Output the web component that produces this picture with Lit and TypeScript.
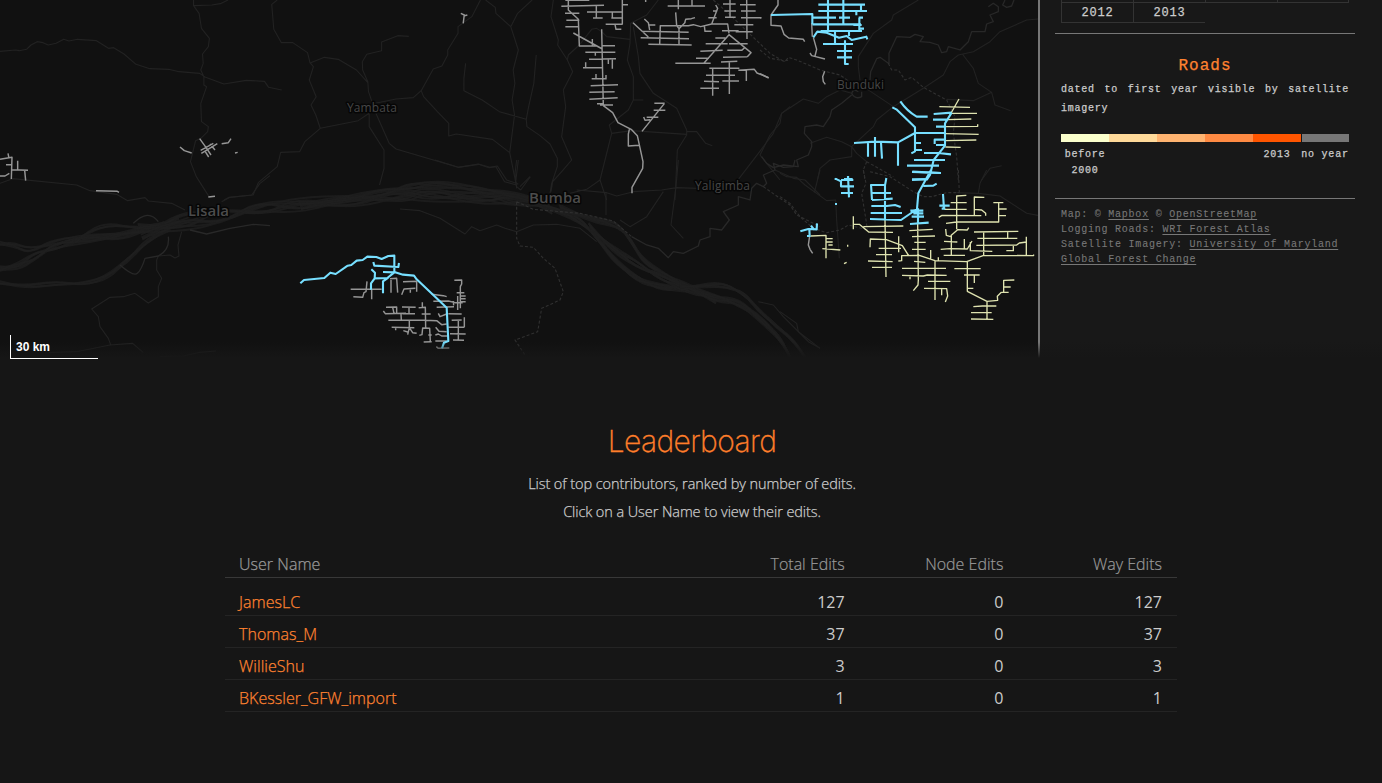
import { LitElement, html, svg, css } from "lit";
import { customElement } from "lit/decorators.js";

type Pt = [number, number];
type Tile = { t: string; dim?: string; dash?: string; water?: string; gray?: string; cream?: string; blue?: string };

// Road tiles: each holds its own origin and is stored at three units per pixel.
const tiles: Tile[] = [
  {
    t: "translate(0 0) scale(.3444 .33333)",
    dim: `M0 154L45 150 56 152 77 148 90 135 108 125 125 128 140 135 163 130 185 118 200 123 225 118 280 122 315 145 330 143 360 162 395 193 435 206 490 208 520 215 580 220 595 231 650 252 715 241 768 244 780 262 818 270
M562 0V17L578 40 585 85 608 115 605 140 588 162 590 190 583 210 592 230V255L600 260 583 310 585 365 605 380 603 395 583 415 568 422 553 485 570 530 607 590
M562 17L615 15 640 11 662 0 M805 0L789 13 795 88 817 128 850 128 893 158 900 188 910 200 898 240 918 290 903 315 917 345 930 385 885 425 870 455 815 457 805 500 750 548 735 585 665 592 650 600
M902 188L942 172 982 178 1035 210 1068 248 M1187 109L1155 107 1108 126V152L1065 163 1052 185 1053 210 1068 245 1070 275 1080 305 1090 310 1150 297 1200 293 1223 272 1258 207 1283 198 1300 165 1300 150 1330 100 1330 80 1370 50 1395 0
M930 385L1040 362 1072 340V380L1115 450V505L1102 555 M1085 325L1130 430 1150 447 1330 502 1390 493 1420 503 1440 500 1465 545 1500 555
M1223 272L1230 290 1270 335 1303 370 1303 408 1325 402 1430 418 1480 458 1500 560 1512 570 M1410 0L1438 22 1440 40 1483 80 1505 150 1490 210 1495 250 1487 300 1494 345 1480 458 M1545 0L1503 40 1483 80
M1352 190L1347 235V272L1400 300 1450 335 1528 358 1535 320 1550 250 1557 165 M1528 358L1530 380 1568 407 M1505 480L1498 540 M1512 570L1540 530`,
    gray: "M1338 40L1348 45 1345 70 M1346 48L1357 45",
  },
  {
    t: "translate(0 130) scale(.33333)",
    dim: `M0 160L38 146 230 165 270 182 350 193 383 212 435 203 445 213 515 220 555 240 M810 137L780 160 755 195 690 202 665 215
M545 305L534 345 537 378 525 384 510 375 475 378 470 390V420L485 445 475 470V500L445 519 405 490 370 500 330 502 275 537 295 560 300 590 325 625 333 647
M145 668L230 665 330 645 398 640 430 668 M480 680L550 678 600 667 648 663`,
    water: `M570 300L620 312 690 295 760 283 810 287 M360 405Q400 440 412 430T435 385L475 378Q510 360 505 320 M400 280Q445 235 475 275`,
    gray: `M0 88L36 82 34 147 M24 70L27 85 M18 104H34 M0 138H15L28 130 M53 92V119 M34 119L84 121 M74 121L77 152 M288 182L352 184 357 187 M540 51L553 62 575 69 M599 26L620 55 633 75
M602 61L640 40 M604 70L652 41 M614 62L626 81 M630 42L645 60 M665 41L685 38 693 26 M705 69L713 67 M625 201L645 199`,
  },
  {
    t: "translate(540 0) scale(.33333)",
    dim: `M40 0L33 50 55 120 53 135 82 180 98 215 70 270 77 320 65 410 95 480 65 515 38 545 33 575 M82 180L85 165 118 135 155 88 170 85 185 95 200 110 270 118 M0 407L30 432 52 475V500L35 550 30 580
M355 0L320 45 272 70 270 130 262 180 280 230 280 300 265 330 208 375 215 400 180 540 200 600 M280 300H310 M280 80L295 170 300 220 340 280 410 325 440 390V405L412 450 405 600
M215 400L275 392 440 403 M440 395L470 395 497 430 517 437 M180 540L140 568 90 580 M110 570L200 578 230 588 280 575 365 570 410 563 470 565 M590 545L655 460 700 400 725 340 750 320`,
    dash: "M520 0L560 35 690 160 730 183 750 180",
    gray: `M85 0V30L115 58 118 138H170 M76 1H148 M64 19L192 16 M75 40H118 M79 61H118 M76 80H116 M169 18V54 M159 54H188 M141 36H247 M247 0V73 M247 14H264 M217 36V55 M214 54H247 M197 73H248 M225 73L228 88H244 M317 0V6
M100 99L187 147 M157 117V138 M185 88L190 317 M186 137H225 M136 157H226 M166 157V167 M147 178L228 176 M205 177V192 M211 176L217 178V206 M129 203H187 M137 187V203 M155 236H200 M168 222V236 M198 225V236 M152 257L234 254 M148 277L224 275 M148 298L233 293 M171 311H190 M180 315H219
M190 317L218 338 234 368 275 389 292 407 309 485 308 505 276 562V580 M268 388L265 402V438L297 436 M306 394L373 311 M343 310H374 M341 331H376 M320 352H355 M311 351L315 361 331 359
M279 68L325 111 M313 57L325 68 329 90 M327 75H346 M305 94L446 97 M302 113L447 116 M325 133L455 135 M359 134L361 76 M360 77H445L460 74 482 80 515 72H563L567 100 M415 0V28 M456 0V17 M383 18H495 M407 37L410 77 417 86 436 67 M417 84V133 M434 69L437 58 454 56 465 53
M527 15L533 25 515 72 M519 33H532 M505 53H530 M493 77L495 94H515 M406 190H512 M492 189L567 104 633 158 622 170 M549 172L622 170 M497 131H563 M526 114H556 M481 154L548 151 M468 175H507 M567 131H623 M562 151H605L613 144
M570 0V52 M549 12H587 M553 33H588 M555 52H587 M546 92H596 M620 0L621 117 M600 14H647 M603 33H647 M603 53H664 M583 74H640 M587 95H638 M543 186L592 184 M508 205H598 M518 203V287 M498 226H585 M492 244L537 245 M481 265H537 M568 184V282 M547 243H597 M595 211L643 208 651 219 686 233 M619 210V243`,
  },
  {
    t: "translate(760 0) scale(.33333)",
    dim: `M475 0L400 45 395 60 340 100 295 170V200L300 240 M834 57L800 60 720 95 690 125 640 155 595 165 570 185 550 225 490 265 400 320 350 360 340 380 275 440 275 470 210 480 180 505 172 540
M607 162L640 205 655 250 695 277 705 315 752 332 M560 298L640 302 695 277 M310 260L400 320 M275 280L240 270 200 290 175 310 130 297 65 340 60 370 30 405 5 455 0 465 20 490 60 540 M150 430L200 412 245 425 275 440 290 460 320 485 M665 540L690 505 725 497`,
    water: `M385 190L360 172 350 176 332 215 330 240 M387 192L387 160 410 110 450 112 465 103 490 110 480 125 510 127 535 135 545 158 560 155 565 140 600 150 625 125 635 95 675 95 680 72 700 65 690 45 715 35 715 20 700 10 685 20 M735 0L728 15 740 22 755 18 762 0
M295 275Q280 265 275 280Q285 300 305 290V275 M275 285L245 310 215 330 210 350 190 380 170 375 135 380 133 400 155 425 155 440 145 465 110 480 115 500 70 495 40 503 20 490 5 470`,
    dash: `M0 150L30 175 60 180 75 185 85 172 110 180 180 210 240 225 290 260 M385 190L395 210 415 210 435 240 455 232 490 262 560 300 585 350 580 400 590 470 595 540 M320 485L310 510 315 540 M320 485L400 530`,
    gray: "M54 0V15L33 45V76L63 78 72 103 86 114 130 118 134 125 M0 53H4 M155 70L157 110 M160 112L170 148 165 168 M150 159L155 167 195 177 M194 214L188 230 190 245 196 253 M0 221L26 234",
    cream: "M597 297L570 345 M538 320L630 322 M575 340H651 M562 359L634 357 M558 380L653 379V373 M556 401L656 403 M556 422L649 420 M556 441L602 442",
    blue: `M33 45L157 42V73 M157 73H303 M157 53H228 M204 0V92 M250 0V70 M175 14H315 M175 33H321 M303 14V33 M289 34V46 M237 53H270 M296 53H309 M298 53V90 M280 75H305 M182 93H306 M296 86H312 M160 112L172 95 200 98 237 113 260 108 275 120 319 110 322 118 M225 95V132 M267 93V108 M189 132H279 M255 121V192H266 M231 153H276 M231 172H276
M421 304Q440 332 470 350H503 M397 322L409 328 465 382V454L454 460 M465 399H555 M465 399L414 427 346 425 282 429 M324 428V470 M345 411V470 M363 428L366 476 M414 427V497 M465 429H483 M465 450H486 M521 342L575 338 M575 338L555 370V437L521 480 510 525 500 540
M519 359H562 M528 380H555 M555 419H524V432 M528 435H553 M492 459H535L573 463 M462 480H555 M441 497H537 M456 516L543 519 M456 538H502 M227 534V540 M264 528V540 M252 537H278`,
  },
  {
    t: "translate(780 170) scale(.33333)",
    dim: "M0 10L20 20 50 22 75 45 140 92 167 90 170 150 178 265 M120 0L103 68 M620 0L600 40 595 70 M530 68L595 70 660 78 740 130 780 137 M0 425L50 460 55 485 85 515 120 535",
    dash: "M0 80L30 100 60 140 100 175 140 188 180 180 205 165 265 180 M250 0L258 40 245 70 258 150 262 180 M535 0L538 68 M270 5L330 20 400 65 430 80 455 80 500 68 538 68",
    gray: "M89 198L85 225 90 238 98 250",
    cream: `M92 198L138 196V265 M138 206H158 M138 216H158 M145 225H158 M127 236L181 240 M203 224V230 M192 281L200 277 M220 139V178 M220 163H238L266 186 339 187 M250 170L370 168 M315 150L318 321 M270 232L271 207 319 209 367 227 386 257 M296 235H363 M356 199V247 M288 254H336 M264 273L338 275 M276 292H336
M413 160L415 330 414 345 400 362 M388 182L458 178 M396 200L465 198 M403 217H437 M396 238H437 M452 240V268 M355 273L365 272V257L418 256 465 272 560 275 611 256 760 257 762 254 M402 274L436 277 M475 262V274 M366 295H498 M366 316L430 318 442 315 500 316 M390 318V328 M444 334H511 M465 272V390 M432 355L500 356 503 378 496 396 M485 357V376
M530 178V78L559 76 M512 98H560 M493 118H560 M476 142L486 136 604 137 M498 160L530 156H656V98 M583 137V81L613 82 M583 118L605 120 617 130V137 M640 98H670 M656 117H680 M656 137H678 M497 177L499 196 512 200 M512 197L533 179 562 180 566 173 M514 197V254 M492 214L532 216 M482 238L510 236 562 237 576 213 M553 207V236 M571 216V242L637 244 M491 256H555
M582 186L715 184 M611 187V256 M683 187V205 M592 205H712 M589 226L710 225 718 219 740 216 M739 200V257 M679 242H700V226 M562 275V364L621 394 653 391 652 379 664 367 M523 296H602 M552 315H599 M583 315V339 M562 355H580 M621 394V447 M580 410L607 408H649 M573 428H635 M573 447L640 448 M664 367H686 M671 367V331L703 330 M672 351H692`,
    blue: `M397 5L483 9 M453 0L415 70 411 117 363 150 270 147 M396 30L438 27 M430 48L460 47 470 41 M166 26L183 34V49H222 M183 30H220 M204 18L207 82 M183 69H219 M165 102h6 M319 24L315 46V147 M271 45H315 M273 43L276 90 M273 69H333 M276 90L338 86 M274 108H320L345 105 362 111 M272 129H366 M391 122H430 M400 130H430 M395 140H432 M390 162L446 158 M413 115L408 133 M414 115V160 M404 118V133 M489 72L492 117 M478 107H509 M485 116H496
M61 184L85 177 110 178 111 160 M93 167L103 180 M88 177L89 198 M81 198H92`,
  },
  {
    t: "translate(280 240) scale(.33333)",
    gray: `M212 148H305 M220 170L248 172 252 158 258 155 261 124 M275 150V178 M330 116L350 115 353 158 M333 120V158 M365 164L372 147 406 145 M369 125L410 124V155 M391 147V158 M310 213L316 221 378 220 M318 202L350 201V220 M338 202L342 220 M366 201L407 202 M387 202V220 M368 221H405 M363 222L364 240
M325 241H435L470 242 485 254 500 252 M335 262L403 263 M347 263V271 M388 241V263L383 284 M370 272L383 276 M388 263L398 278 410 280 M427 187V203 M416 203L436 202 437 263 M425 222H452 M418 286L426 284 428 264 449 265 451 305 M431 306L455 305 M445 285H455 M467 262L477 274 500 275 M466 285L475 282 485 288 503 288 M466 303H500 M469 320L475 325 508 324
M455 163L490 167 500 170 M460 184L505 183 525 188 548 188 M520 183L521 196 M533 168V210 M523 121L545 120V132L541 140V205 M530 158H553 M541 168H557 M541 176H557 M541 185H557 M470 202L522 200 M475 220L480 230 500 222 M505 221L545 222 M515 241L545 240 M553 232V262 M505 262H553 M535 242V300 M510 281L557 282 M519 300L552 301`,
    blue: "M61 130L72 120 133 114 151 98 167 102 203 77 214 75 230 62 248 60 262 50 289 51 305 57 325 48 343 47V96L369 104 402 107 410 118 500 203 505 303 492 308 486 325 M280 66L283 77 355 81 357 69 M309 96L343 97 M274 88L285 98 284 115 273 130V149 M284 115L322 114 343 97 M325 113L309 124V160",
  },
  {
    t: "translate(400 160) scale(.33333)",
    dim: `M105 0L175 22 235 12 270 22 292 18 320 60 355 72 M350 0L345 40 350 85 M360 80L390 50 M0 147L60 152 120 175 195 222 215 200 240 212 290 195 315 205 350 215 400 195 470 193 540 205 590 245 M618 100L618 165
M790 95L740 170 690 200 660 180 M835 0L828 80 813 195 850 235 M1075 425L1120 435 1150 470 1195 515 1260 565 M1125 30L1180 55 1215 60 1260 105`,
    water: "M695 230L740 255 775 265 805 293 820 275 850 280 895 258 900 240 930 230 930 205 965 210 988 180 970 155 1015 135 1015 110 1050 120 1055 85 1070 70 1090 80 1100 70 1090 45 1125 30 1120 10 1150 22 1180 20 1185 0",
    dash: "M350 125L400 148 540 160 640 183 695 230 M350 125V235L360 258 400 262 430 295 465 325 490 395 480 420 425 445 413 515 345 540 375 585 M1090 80L1140 115 1170 135 1190 165 1240 190 1260 200",
  },
];

// River channels: centre line, number of strands and how far they wander.
const channels: { pts: Pt[]; n: number; spread: number }[] = [
  { pts: [[-8, 243], [12, 243], [28, 251], [50, 243], [80, 238], [110, 236], [140, 231], [165, 225]], n: 4, spread: 3 },
  { pts: [[-8, 269], [15, 268], [35, 256], [55, 246], [85, 239], [120, 237], [150, 228], [180, 222]], n: 7, spread: 4 },
  { pts: [[-8, 281], [22, 287], [55, 283], [85, 284], [108, 277], [128, 260], [148, 240], [170, 228]], n: 4, spread: 2 },
  { pts: [[75, 242], [90, 230], [110, 224], [135, 228], [160, 227], [175, 217], [190, 213], [210, 214]], n: 3, spread: 1.5 },
  { pts: [[140, 232], [180, 225], [220, 216], [260, 208], [300, 205], [350, 201], [400, 196], [430, 194], [480, 197], [520, 200], [550, 206]], n: 9, spread: 8 },
  { pts: [[300, 206], [340, 200], [385, 192], [410, 186], [440, 184], [480, 190], [520, 196], [550, 205]], n: 6, spread: 4 },
  { pts: [[530, 201], [560, 211], [580, 220], [597, 237], [612, 258], [635, 278], [660, 288], [688, 288]], n: 9, spread: 4 },
  { pts: [[560, 208], [590, 219], [618, 224], [632, 242], [642, 260], [665, 276], [690, 287], [715, 300]], n: 7, spread: 3.5 },
  { pts: [[590, 228], [610, 247], [635, 263], [660, 277], [690, 290], [715, 298], [740, 303], [762, 320], [782, 340], [792, 362]], n: 9, spread: 5 },
  { pts: [[680, 288], [705, 285], [725, 285], [745, 294], [758, 310], [775, 325], [795, 342], [808, 362]], n: 6, spread: 2.5 },
];

function strand(pts: Pt[], i: number, spread: number): string {
  const p = pts.map(([x, y], j): Pt => {
    const o = spread * Math.sin(i * 2.4 + j * 1.1 + i * j * 0.35);
    return [x + o * 0.3, y + o];
  });
  let d = `M${p[0][0].toFixed(1)} ${p[0][1].toFixed(1)}`;
  for (let j = 1; j < p.length - 1; j++) {
    const mx = (p[j][0] + p[j + 1][0]) / 2;
    const my = (p[j][1] + p[j + 1][1]) / 2;
    d += `Q${p[j][0].toFixed(1)} ${p[j][1].toFixed(1)} ${mx.toFixed(1)} ${my.toFixed(1)}`;
  }
  const e = p[p.length - 1];
  return d + `L${e[0].toFixed(1)} ${e[1].toFixed(1)}`;
}

@customElement("road-map")
export class RoadMap extends LitElement {
  static styles = css`
    :host { display: block; background: #111; height: 358px; overflow: hidden; }
    svg { display: block; }
    path { fill: none; vector-effect: non-scaling-stroke; stroke-linejoin: round; }
    .river { stroke: #1f1f1f; stroke-width: 2; stroke-opacity: .8; }
    .dim { stroke: #222; stroke-width: 1.1; }
    .water { stroke: #282828; stroke-width: 1.3; }
    .dash { stroke: #303030; stroke-width: 1.1; stroke-dasharray: 3 2; }
    .gray { stroke: #969696; stroke-width: 1.45; }
    .cream { stroke: #dfe3b0; stroke-width: 1.35; }
    .blue { stroke: #77dfff; stroke-width: 2.1; }
    text { font-family: "Open Sans", "Noto Sans", sans-serif; fill: #464646; stroke: #060606; stroke-width: 3px; paint-order: stroke; stroke-linejoin: round; font-size: 12px; }
    .city { font-size: 15px; font-weight: 600; fill: #4c4c4c; }
  `;
  render() {
    const layer = (k: Exclude<keyof Tile, "t">) =>
      tiles.filter((t) => t[k]).map((t) => svg`<g transform=${t.t}><path class=${k} d=${t[k]!}></path></g>`);
    return html`<svg width="1038" height="358" viewBox="0 0 1038 358">
      ${channels.map((c) => Array.from({ length: c.n }, (_, i) => svg`<path class="river" d=${strand(c.pts, i, c.spread)}></path>`))}
      ${layer("dim")}${layer("water")}${layer("dash")}
      <text x="347" y="112" textLength="50">Yambata</text>
      <text x="837" y="89" textLength="47">Bunduki</text>
      <text x="695" y="190" textLength="55">Yaligimba</text>
      <text class="city" x="188" y="216" textLength="41">Lisala</text>
      <text class="city" x="529" y="203" textLength="52">Bumba</text>
      ${layer("gray")}${layer("cream")}${layer("blue")}
    </svg>`;
  }
}

@customElement("map-sidebar")
export class MapSidebar extends LitElement {
  static styles = css`
    :host { display: block; box-sizing: border-box; height: 358px; overflow: hidden; background: #181818; border-left: 2px solid #777; padding: 0 27px 0 15px; color: #ccc; font: 10px/15px "Liberation Mono", monospace; letter-spacing: .76px; -webkit-text-stroke: .25px currentColor; }
    .years { display: grid; grid-template-columns: repeat(4, 72px); margin-left: 6px; width: 288px; }
    .stub { height: 2px; border-left: 1px solid #333; border-bottom: 1px solid #333; }
    .stub.last { border-right: 1px solid #333; }
    .year { height: 19px; line-height: 21px; border-left: 1px solid #333; border-bottom: 1px solid #333; text-align: center; font-size: 12px; letter-spacing: .8px; }
    .rule { height: 1px; background: #777; width: 300px; }
    .roads { padding: 0 6px; width: 288px; }
    h3 { margin: 0; font-size: 16px; line-height: 24px; font-weight: 400; letter-spacing: 1px; color: #ff8230; text-align: center; }
    p { margin: 2px 0 0; text-align: justify; line-height: 19px; }
    .ramp { display: grid; grid-template-columns: repeat(6, 48px); height: 8px; margin: 16px 0 5px; }
    .c0 { background: #fbffcc; } .c1 { background: #fed999; } .c2 { background: #feb370; } .c3 { background: #fe8a43; } .c4 { background: #ff5500; } .c5 { background: #777; margin-left: 1px; }
    .labels { display: grid; grid-template-columns: 48px 1fr 48px 48px; line-height: 16px; text-align: center; white-space: nowrap; }
    .credits { padding: 0 6px; color: #777; white-space: nowrap; -webkit-text-stroke-width: .1px; }
    a { color: #777; text-decoration: underline; text-underline-offset: 2px; }
    .g1 { height: 10px; } .g2 { height: 20px; } .g4 { height: 19px; } .g5 { height: 8px; }
  `;
  render() {
    return html`
      <div class="years">
        <div class="stub"></div><div class="stub"></div><div class="stub"></div><div class="stub last"></div>
        <div class="year">2012</div><div class="year">2013</div>
      </div>
      <div class="g1"></div>
      <div class="rule"></div>
      <div class="g2"></div>
      <div class="roads">
        <h3>Roads</h3>
        <p>dated to first year visible by satellite imagery</p>
        <div class="ramp">${[0, 1, 2, 3, 4, 5].map((i) => html`<div class="c${i}"></div>`)}</div>
        <div class="labels"><div>before<br>2000</div><div></div><div>2013</div><div>no year</div></div>
      </div>
      <div class="g4"></div>
      <div class="rule"></div>
      <div class="g5"></div>
      <div class="credits">
        Map: © <a>Mapbox</a> © <a>OpenStreetMap</a><br>
        Logging Roads: <a>WRI Forest Atlas</a><br>
        Satellite Imagery: <a>University of Maryland</a><br>
        <a>Global Forest Change</a>
      </div>`;
  }
}

@customElement("leader-board")
export class LeaderBoard extends LitElement {
  static styles = css`
    :host { display: block; padding-top: 60px; font-family: "Open Sans", sans-serif; color: #ccc; }
    h2 { margin: 0; font: 200 30px/46px Inter, sans-serif; letter-spacing: -.6px; color: #ff7e2a; text-align: center; padding-left: 2px; -webkit-text-stroke: .3px #ff7e2a; }
    p { margin: 0; font-size: 14.5px; font-weight: 300; line-height: 28px; letter-spacing: -.08px; text-align: center; padding-left: 2px; -webkit-text-stroke: .25px #ccc; }
    .intro { padding-top: 6px; }
    .table { width: 952px; margin: 24px 0 0 225px; font-size: 16px; }
    .row { display: grid; grid-template-columns: 3fr 1fr 1fr 1fr; height: 31px; line-height: 37px; border-bottom: 1px solid #242424; }
    .row > div { padding: 0 15px; text-align: right; }
    .row > .name { text-align: left; color: #ff8230; font-weight: 300; padding-left: 14px; -webkit-text-stroke: .25px currentColor; letter-spacing: .04px; }
    .head { height: 27px; line-height: 29px; margin-bottom: 6px; border-color: #383838; color: #999; font-weight: 300; -webkit-text-stroke: .2px currentColor; }
    .head > .name { color: #999; }
  `;
  rows = [["JamesLC", 127, 0, 127], ["Thomas_M", 37, 0, 37], ["WillieShu", 3, 0, 3], ["BKessler_GFW_import", 1, 0, 1]];
  render() {
    return html`
      <h2>Leaderboard</h2>
      <div class="intro">
        <p>List of top contributors, ranked by number of edits.</p>
        <p>Click on a User Name to view their edits.</p>
      </div>
      <div class="table">
        <div class="row head"><div class="name">User Name</div><div>Total Edits</div><div>Node Edits</div><div>Way Edits</div></div>
        ${this.rows.map((r) => html`<div class="row"><div class="name">${r[0]}</div><div>${r[1]}</div><div>${r[2]}</div><div>${r[3]}</div></div>`)}
      </div>`;
  }
}

@customElement("app-root")
export class AppRoot extends LitElement {
  static styles = css`
    :host { display: block; height: 783px; overflow: hidden; background: #161616; }
    .top { position: relative; display: grid; grid-template-columns: 1038px 344px; height: 358px; }
    .fade { position: absolute; left: 0; right: 0; bottom: 0; height: 16px; background: linear-gradient(#16161600, #161616); }
    .scale { position: absolute; left: 10px; top: 335px; box-sizing: border-box; width: 88px; height: 24px; border: 1px solid #fff; border-top: 0; border-right: 0; color: #fff; font: bold 12px/24px "Liberation Sans", sans-serif; padding-left: 5px; }
  `;
  render() {
    return html`
      <div class="top">
        <road-map></road-map>
        <map-sidebar></map-sidebar>
        <div class="fade"></div>
        <div class="scale">30 km</div>
      </div>
      <leader-board></leader-board>`;
  }
}
